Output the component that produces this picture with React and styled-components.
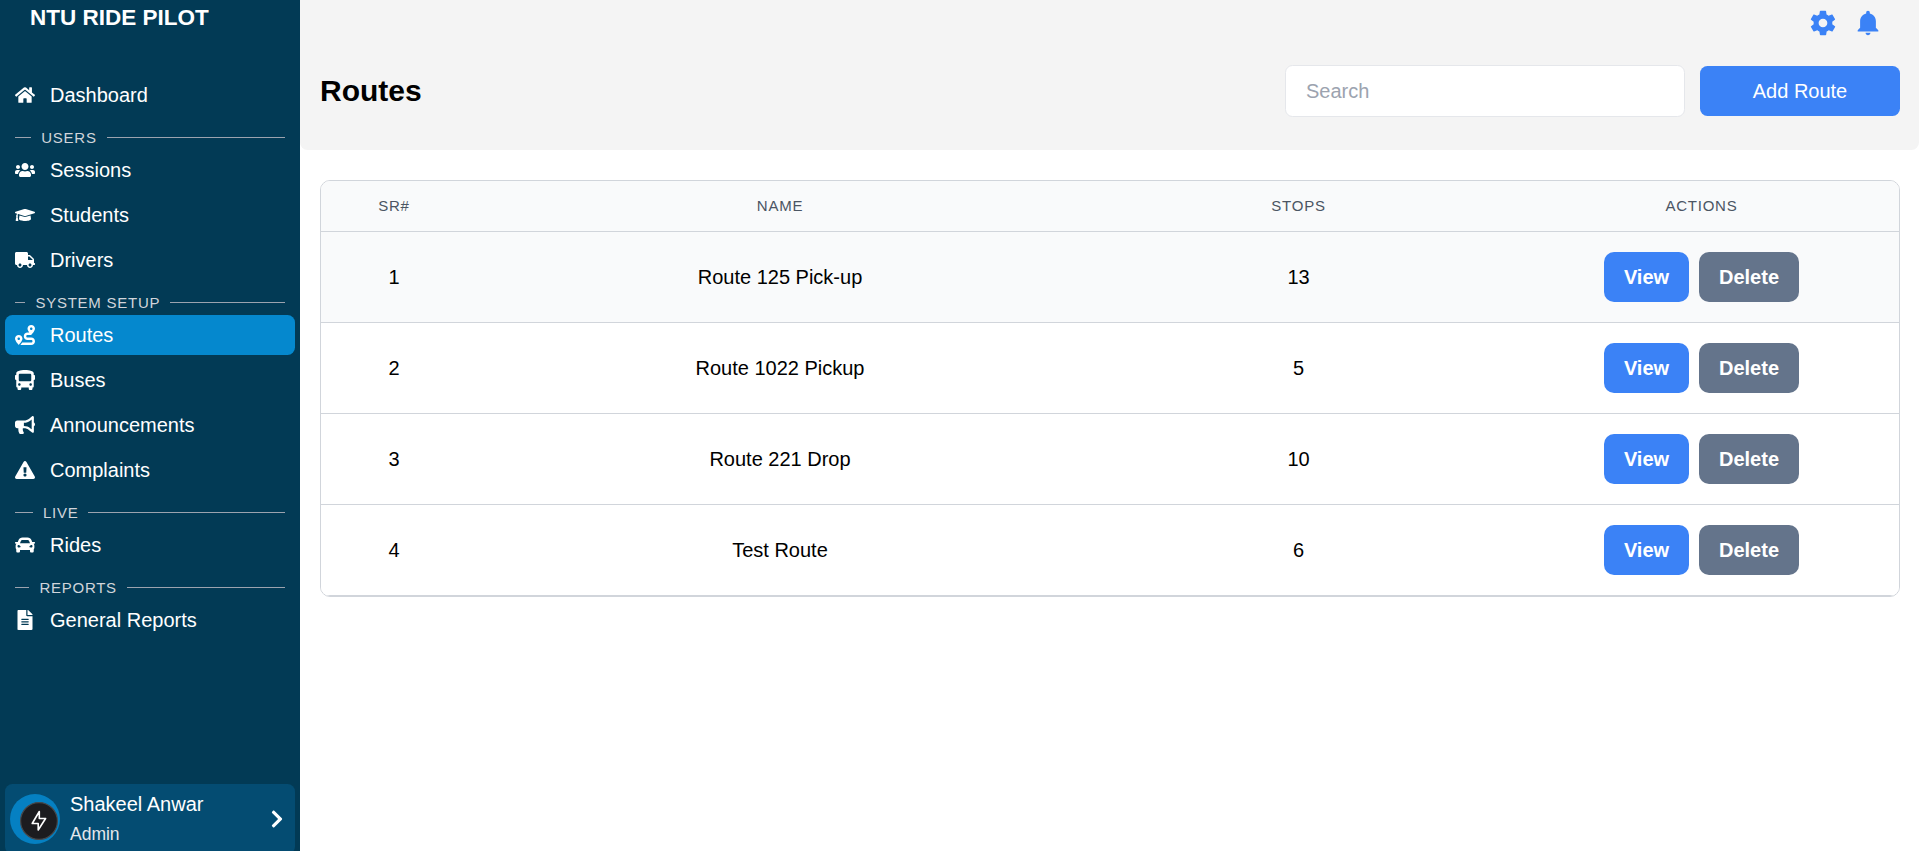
import React from "react";
import styled, { createGlobalStyle } from "styled-components";
import { FaHome, FaUsers, FaGraduationCap, FaTruck, FaRoute, FaBus, FaBullhorn, FaExclamationTriangle, FaCar, FaFileAlt, FaChevronRight } from "react-icons/fa";
import { IoMdSettings, IoMdNotifications } from "react-icons/io";

const GlobalStyle = createGlobalStyle`
  *, *::before, *::after { box-sizing: border-box; }
  body { margin: 0; font-family: "Liberation Sans", Arial, sans-serif; font-size: 20px; line-height: 30px; color: #000; background: #fff; }
  button, input { font: inherit; }
`;

const Page = styled.div`
  display: flex;
  height: 851px;
  overflow: hidden;
`;

const Sidebar = styled.aside`
  display: flex;
  flex-direction: column;
  flex: 0 0 300px;
  height: 854px;
  padding: 0 5px;
  background: #023a55;
  color: #fff;
`;

const Brand = styled.div`
  height: 75px;
  padding: 0 25px;
  font-size: 22.5px;
  font-weight: 700;
  line-height: 35px;
`;

const Nav = styled.nav`
  flex: 1;
`;

const NavItem = styled.a`
  display: flex;
  align-items: center;
  gap: 15px;
  height: 40px;
  margin-bottom: 5px;
  padding: 0 10px;
  border-radius: 7.5px;
  background: ${(p) => (p.$active ? "#0588ce" : "transparent")};

  svg { width: 20px; height: 20px; }
`;

const SectionLabel = styled.div`
  display: flex;
  align-items: center;
  gap: 10px;
  height: 25px;
  margin-top: 10px;
  padding: 0 10px;
  color: #d1d5db;
  font-size: 15px;
  letter-spacing: 0.75px;

  &::before, &::after { content: ""; height: 1px; background: #9ca3af; }
  &::before { flex: 1 0 0; }
  &::after { flex: 11 0 0; }
`;

const UserCard = styled.div`
  display: flex;
  align-items: center;
  height: 70px;
  padding: 0 8px 0 5px;
  border-radius: 7.5px;
  background: #044c72;
`;

const Avatar = styled.div`
  display: flex;
  flex: 0 0 50px;
  height: 50px;
  padding: 8px 0 0 10px;
  border-radius: 50%;
  background: #0580c2;
`;

const UserText = styled.div`
  flex: 1;
  padding-left: 10px;
`;

const UserName = styled.div`
  line-height: 30px;
`;

const UserRole = styled.div`
  color: #e5e7eb;
  font-size: 17.5px;
  line-height: 30px;
`;

const Main = styled.main`
  flex: 1;
  min-width: 0;
`;

const Header = styled.header`
  height: 150px;
  padding: 0 19px 0 20px;
  border-radius: 0 0 7.5px 7.5px;
  background: #f4f4f4;
`;

const HeaderIcons = styled.div`
  display: flex;
  justify-content: flex-end;
  gap: 15px;
  height: 65px;
  padding: 7.5px 17px 0 0;
  color: #3b82f6;

  svg { width: 30px; height: 30px; }
`;

const TitleRow = styled.div`
  display: flex;
  align-items: center;
  gap: 15px;
  height: 52px;
`;

const Title = styled.h1`
  flex: 1;
  margin: 0;
  font-size: 30px;
  line-height: 40px;
`;

const SearchInput = styled.input`
  width: 400px;
  height: 52px;
  padding: 0 20px;
  border: 1px solid #e5e7eb;
  border-radius: 7.5px;
  background: #fff;

  &::placeholder { color: #9ca3af; }
`;

const AddButton = styled.button`
  width: 200px;
  height: 50px;
  border: 0;
  border-radius: 7.5px;
  background: #3b82f6;
  color: #fff;
`;

const TableCard = styled.section`
  margin: 30px 19px 0 20px;
  border: 1px solid #d1d5db;
  border-radius: 10px;
  overflow: hidden;
`;

const Row = styled.div`
  display: grid;
  grid-template-columns: 146px 626px 411px 1fr;
  align-items: center;
  justify-items: center;
  height: 91px;
  border-bottom: 1px solid #d1d5db;
  background: ${(p) => (p.$shaded ? "#f9fafb" : "#fff")};
`;

const HeadRow = styled(Row)`
  height: 51px;
  background: #f9fafb;
  color: #4b5563;
  font-size: 15px;
  letter-spacing: 0.75px;
`;

const Actions = styled.div`
  display: flex;
  gap: 10px;
`;

const ActionButton = styled.button`
  width: ${(p) => (p.$kind === "delete" ? 100 : 85)}px;
  height: 50px;
  padding: 0;
  border: 0;
  border-radius: 10px;
  background: ${(p) => (p.$kind === "delete" ? "#64748b" : "#3b82f6")};
  color: #fff;
  font-weight: 700;
`;

const sections = [
  { items: [["Dashboard", FaHome]] },
  { label: "USERS", items: [["Sessions", FaUsers], ["Students", FaGraduationCap], ["Drivers", FaTruck]] },
  { label: "SYSTEM SETUP", items: [["Routes", FaRoute], ["Buses", FaBus], ["Announcements", FaBullhorn], ["Complaints", FaExclamationTriangle]] },
  { label: "LIVE", items: [["Rides", FaCar]] },
  { label: "REPORTS", items: [["General Reports", FaFileAlt]] },
];

const routes = [
  ["Route 125 Pick-up", 13],
  ["Route 1022 Pickup", 5],
  ["Route 221 Drop", 10],
  ["Test Route", 6],
];

const BoltBadge = () => (
  <svg width="38" height="38" viewBox="0 0 38 38" fill="none">
    <circle cx="19" cy="19" r="18.4" fill="#1c1c1f" stroke="#46484b" strokeWidth="1.2" />
    <path d="M19.3 9.5 L12.2 21.5 H18.2 V28 L25.6 16.5 H19.3 Z" stroke="#fff" strokeWidth="1.6" strokeLinejoin="round" />
  </svg>
);

export default function App() {
  return (
    <>
      <GlobalStyle />
      <Page>
        <Sidebar>
          <Brand>NTU RIDE PILOT</Brand>
          <Nav>
            {sections.map(({ label, items }) => (
              <React.Fragment key={label || "top"}>
                {label && <SectionLabel>{label}</SectionLabel>}
                {items.map(([name, Icon]) => (
                  <NavItem key={name} $active={name === "Routes"}>
                    <Icon />
                    {name}
                  </NavItem>
                ))}
              </React.Fragment>
            ))}
          </Nav>
          <UserCard>
            <Avatar><BoltBadge /></Avatar>
            <UserText>
              <UserName>Shakeel Anwar</UserName>
              <UserRole>Admin</UserRole>
            </UserText>
            <FaChevronRight />
          </UserCard>
        </Sidebar>
        <Main>
          <Header>
            <HeaderIcons>
              <IoMdSettings />
              <IoMdNotifications />
            </HeaderIcons>
            <TitleRow>
              <Title>Routes</Title>
              <SearchInput placeholder="Search" />
              <AddButton>Add Route</AddButton>
            </TitleRow>
          </Header>
          <TableCard>
            <HeadRow>
              <span>SR#</span>
              <span>NAME</span>
              <span>STOPS</span>
              <span>ACTIONS</span>
            </HeadRow>
            {routes.map(([name, stops], i) => (
              <Row key={name} $shaded={i === 0}>
                <span>{i + 1}</span>
                <span>{name}</span>
                <span>{stops}</span>
                <Actions>
                  <ActionButton $kind="view">View</ActionButton>
                  <ActionButton $kind="delete">Delete</ActionButton>
                </Actions>
              </Row>
            ))}
          </TableCard>
        </Main>
      </Page>
    </>
  );
}
